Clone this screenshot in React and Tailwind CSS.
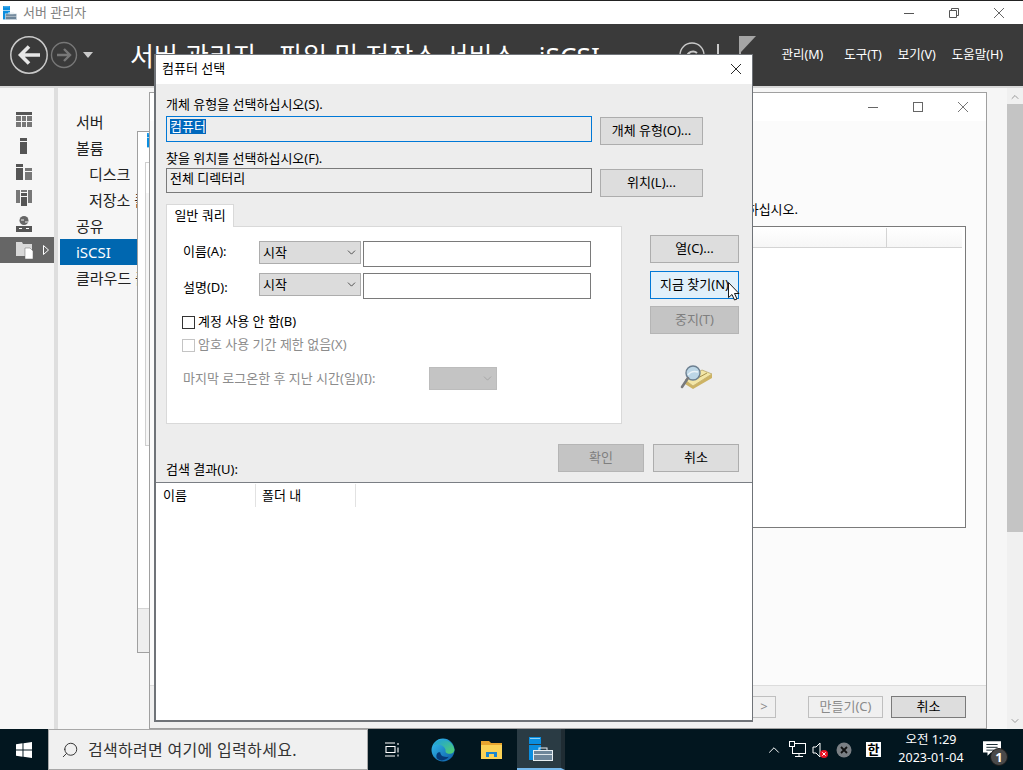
import React from 'react'
import { Search, ChevronDown, ChevronUp } from 'lucide-react'

const Btn = ({ children, className = '', state = 'normal' }) => {
  const look = {
    normal: 'bg-[#dddddd] border-[#adadad] text-black',
    hot: 'bg-[#e1f0fa] border-[#0078d7] text-black',
    disabled: 'bg-[#c4c4c4] border-[#b5b5b5] text-[#7f7f7f]',
    ghost: 'bg-[#f0f0f0] border-[#bfbfbf] text-[#8a8a8a]',
    dark: 'bg-[#dddddd] border-[#7a7a7a] text-black',
  }
  return (
    <div className={`flex items-center justify-center border text-[13px] ${look[state]} ${className}`}>
      {children}
    </div>
  )
}

// thin window caption glyphs
const CaptionIcon = ({ kind, color = '#555' }) => (
  <svg width="12" height="12" viewBox="0 0 12 12" fill="none" stroke={color} strokeWidth="1">
    {kind === 'min' && <path d="M1 6.500h10" />}
    {kind === 'max' && <rect x="1.500" y="1.500" width="9" height="9" />}
    {kind === 'restore' && <path d="M1.500 3.500h7v7h-7zM3.500 3.500v-2h7v7h-2" />}
    {kind === 'close' && <path d="M1 1l10 10M11 1L1 11" strokeWidth="0.9" />}
  </svg>
)

const ServerIcon = ({ size = 16 }) => (
  <svg width={size} height={size} viewBox="0 0 24 24">
    <rect x="0" y="0" width="12" height="7" fill="#0a8ee0" />
    <rect x="0" y="8" width="12" height="15" fill="#0a8ee0" />
    <rect x="1" y="1" width="10" height="1" fill="#8fd0f5" />
    <rect x="4.500" y="13.500" width="19" height="10" fill="#6d8599" stroke="#e8eef2" strokeWidth="1" />
    <rect x="10" y="11" width="8" height="2.500" fill="none" stroke="#e8eef2" strokeWidth="1" />
    <rect x="4.500" y="17" width="19" height="1" fill="#dfe6ea" />
  </svg>
)

const SideIcon = ({ kind }) => {
  const c = '#555555'
  if (kind === 'table') return (
    <svg width="16" height="16" viewBox="0 0 16 16">
      <rect x="0" y="0" width="16" height="3" fill={c} />
      <rect x="0" y="4" width="5" height="5" fill="#777" /><rect x="6" y="4" width="4" height="5" fill="#777" /><rect x="11" y="4" width="5" height="5" fill="#777" />
      <rect x="0" y="10" width="5" height="5" fill="#777" /><rect x="6" y="10" width="4" height="5" fill="#777" /><rect x="11" y="10" width="5" height="5" fill="#777" />
    </svg>
  )
  if (kind === 'one') return (
    <svg width="16" height="16" viewBox="0 0 16 16">
      <rect x="4" y="0" width="7" height="3" fill={c} /><rect x="4" y="4" width="7" height="12" fill={c} />
    </svg>
  )
  if (kind === 'all') return (
    <svg width="16" height="16" viewBox="0 0 16 16">
      <rect x="0" y="0" width="7" height="3" fill={c} /><rect x="0" y="4" width="7" height="12" fill={c} />
      <rect x="9" y="4" width="7" height="3" fill="#777" /><rect x="9" y="8" width="7" height="8" fill="#777" />
    </svg>
  )
  if (kind === 'group') return (
    <svg width="16" height="16" viewBox="0 0 16 16">
      <rect x="0" y="0" width="4" height="13" fill="#777" /><rect x="12" y="0" width="4" height="13" fill="#777" />
      <rect x="5" y="0" width="6" height="2" fill="#777" />
      <rect x="4" y="3" width="8" height="3" fill="#f6f6f6" /><rect x="5" y="3" width="6" height="3" fill={c} /><rect x="5" y="7" width="6" height="9" fill={c} />
    </svg>
  )
  if (kind === 'globe') return (
    <svg width="16" height="16" viewBox="0 0 16 16">
      <circle cx="8" cy="4.500" r="4.500" fill="#666" /><path d="M5 3h3v2H5zM9 5h3v2H9z" fill="#aaa" />
      <rect x="0" y="10" width="16" height="6" fill={c} />
      <rect x="3" y="12" width="3" height="1" fill="#fff" /><rect x="10" y="12" width="3" height="1" fill="#fff" />
    </svg>
  )
  return (
    <svg width="17" height="17" viewBox="0 0 17 17">
      <path d="M0 0h6l1 2h9v12H0z" fill="#d8d8d8" />
      <path d="M9 6h5l3 3v8H9z" fill="#ffffff" stroke="#666" strokeWidth="0.5" />
    </svg>
  )
}

const Select = ({ className = '', disabled, label }) => (
  <div className={`flex items-start justify-between border pl-[3px] pr-[2px] ${disabled ? 'bg-[#c4c4c4] border-[#bcbcbc]' : 'bg-[#dcdcdc] border-[#adadad]'} ${className}`}>
    <span className="text-[13px] leading-[20px]">{label}</span>
    <ChevronDown size={13} strokeWidth={1.5} className={`mt-[4px] ${disabled ? 'text-[#a0a0a0]' : 'text-[#333]'}`} />
  </div>
)

const ComputerDialog = () => (
  <div className="absolute left-[154px] top-[54px] w-[599px] h-[668px] flex flex-col bg-[#ededed] border border-[#6f7378] border-b-2 border-l-2 text-black text-[13px]">
    <div className="h-[29px] shrink-0 bg-white flex items-center justify-between pl-[6px] pr-[10px]">
      <span className="-mt-[2px]">컴퓨터 선택</span>
      <div className="-mt-[2px]"><CaptionIcon kind="close" color="#111" /></div>
    </div>

    <div className="flex-1 flex flex-col pl-[10px] pr-[12px]">
      <div className="mt-[10px] h-[20px] leading-[20px]">개체 유형을 선택하십시오(S).</div>
      <div className="flex gap-[8px] mt-[2px] h-[29px] items-start">
        <div className="w-[426px] h-[26px] border border-[#0078d7] pl-[3px] pt-[2px] flex items-start">
          <span className="bg-[#0068bd] text-white leading-[15px] h-[15px]">컴퓨터</span>
        </div>
        <Btn className="w-[103px] h-[28px] mt-[1px]">개체 유형(O)...</Btn>
      </div>
      <div className="mt-[3px] h-[20px] leading-[20px]">찾을 위치를 선택하십시오(F).</div>
      <div className="flex gap-[8px] h-[29px] items-start">
        <div className="w-[426px] h-[25px] border border-[#7a7a7a] pl-[3px] leading-[18px]">전체 디렉터리</div>
        <Btn className="w-[103px] h-[28px] mt-[1px]">위치(L)...</Btn>
      </div>

      <div className="mt-[7px] w-[68px] h-[23px] bg-white border border-b-0 border-[#d9d9d9] flex items-center justify-center relative z-10">일반 쿼리</div>
      <div className="flex -mt-[1px]">
        <div className="w-[456px] h-[198px] shrink-0 bg-white border border-[#d9d9d9] flex flex-col pl-[15px]">
          <div className="flex items-start mt-[14px]">
            <span className="ml-[1px] w-[76px] leading-[20px]">이름(A):</span>
            <Select className="w-[102px] h-[23px]" label="시작" />
            <div className="w-[228px] h-[26px] ml-[2px] bg-white border border-[#7a7a7a]" />
          </div>
          <div className="flex items-start mt-[6px]">
            <span className="ml-[1px] w-[76px] leading-[20px] mt-[4px]">설명(D):</span>
            <Select className="w-[102px] h-[23px]" label="시작" />
            <div className="w-[228px] h-[26px] ml-[2px] bg-white border border-[#7a7a7a]" />
          </div>
          <div className="flex items-center gap-[3px] mt-[15px] h-[16px]">
            <div className="w-[13px] h-[13px] border border-[#333] bg-white" />
            <span>계정 사용 안 함(B)</span>
          </div>
          <div className="flex items-center gap-[3px] mt-[7px] h-[16px] text-[#8c8c8c]">
            <div className="w-[13px] h-[13px] border border-[#c4c4c4] bg-white" />
            <span>암호 사용 기간 제한 없음(X)</span>
          </div>
          <div className="flex items-center mt-[14px]">
            <span className="ml-[1px] w-[246px] text-[#8c8c8c]">마지막 로그온한 후 지난 시간(일)(I):</span>
            <Select disabled className="w-[68px] h-[23px]" label="" />
          </div>
        </div>
        <div className="flex flex-col gap-[8px] ml-[28px] pt-[9px] w-[89px]">
          <Btn className="h-[28px]">열(C)...</Btn>
          <Btn state="hot" className="h-[28px]">지금 찾기(N)</Btn>
          <Btn state="disabled" className="h-[28px] -mt-[1px]">중지(T)</Btn>
          <div className="mt-[23px] ml-[30px]">
            <svg width="32" height="24" viewBox="0 0 32 24">
              <path d="M5 15 L22 5 L32 9 L13 21 Z" fill="#f3e6a6" stroke="#a5914e" strokeWidth="0.6" />
              <path d="M5 15 L13 21 L32 9 L32 13 L13 24 L5 19 Z" fill="#cdb364" />
              <path d="M16 14 L27 8" stroke="#a5914e" strokeWidth="1" />
              <circle cx="13" cy="8" r="7" fill="#bcd6e6" stroke="#6c7f90" strokeWidth="1.4" />
              <path d="M8 10c2-3 6-4 10-3" stroke="#eaf3f8" strokeWidth="1.5" fill="none" />
              <path d="M8 13 L2 22" stroke="#77797c" strokeWidth="2.6" strokeLinecap="round" />
            </svg>
          </div>
        </div>
      </div>

      <div className="flex items-start mt-[20px]">
        <span className="w-[392px] leading-[20px] mt-[15px]">검색 결과(U):</span>
        <Btn state="disabled" className="w-[86px] h-[28px]">확인</Btn>
        <Btn className="w-[86px] h-[28px] ml-[9px]">취소</Btn>
      </div>
    </div>

    <div className="h-[238px] shrink-0 bg-white border-t border-[#7a7e84] flex items-start pt-[1px]">
      <div className="w-[100px] h-[23px] border-r border-[#e2e2e2] pl-[7px] leading-[22px]">이름</div>
      <div className="w-[100px] h-[23px] border-r border-[#e2e2e2] pl-[6px] leading-[22px]">폴더 내</div>
    </div>
  </div>
)

const CreateWizard = () => (
  <div className="absolute left-[149px] top-[92px] w-[838px] h-[637px] bg-white border border-[#a0a0a0] flex flex-col text-[13px]">
    <div className="h-[28px] shrink-0 bg-white flex items-center justify-end gap-[33px] pr-[17px]">
      <CaptionIcon kind="min" color="#666" />
      <CaptionIcon kind="max" color="#666" />
      <CaptionIcon kind="close" color="#666" />
    </div>
    <div className="flex-1 bg-[#fbfbfb] flex flex-col items-end pr-[20px]">
      <div className="mr-[168px] mt-[78px] h-[20px] leading-[20px] text-black">사용할 대상을 선택하십시오.</div>
      <div className="w-[214px] h-[302px] mt-[7px] bg-white border border-[#7a7a7a] flex pt-[1px] pr-[3px]">
        <div className="flex-1 h-[20px] bg-gradient-to-b from-white to-[#f6f6f6] border-b border-[#d4d4d4]" />
        <div className="w-[76px] h-[20px] bg-gradient-to-b from-white to-[#f6f6f6] border-b border-l border-[#d4d4d4]" />
      </div>
    </div>
    <div className="h-[43px] shrink-0 bg-[#f0f0f0] border-t border-[#dcdcdc] flex items-start pt-[10px] justify-end pr-[20px]">
      <Btn state="ghost" className="w-[24px] h-[22px] mr-[32px]">&gt;</Btn>
      <Btn state="ghost" className="w-[75px] h-[22px]">만들기(C)</Btn>
      <Btn state="dark" className="w-[75px] h-[22px] ml-[8px]">취소</Btn>
    </div>
  </div>
)

const BackWindow = () => (
  <div className="absolute left-[137px] top-[131px] w-[20px] h-[522px] bg-white border border-[#a0a0a0] flex flex-col">
    <div className="h-[30px] pl-[9px] pt-[1px] overflow-hidden shrink-0"><ServerIcon size={15} /></div>
    <div className="h-[284px] shrink-0 ml-[7px] border border-[#cfcfcf] bg-[#f6f6f6]">
      <div className="h-[30px] bg-white" />
    </div>
    <div className="flex-1" />
    <div className="h-[44px] shrink-0 bg-[#eeeeee] border-t border-[#d4d4d4]" />
  </div>
)

const navItems = [
  ['서버', false],
  ['볼륨', false],
  ['디스크', true],
  ['저장소 풀', true],
  ['공유', false],
  ['iSCSI', false],
  ['클라우드 폴더', false],
]

const Tray = () => (
  <div className="flex items-center h-full text-white">
    <ChevronUp size={18} strokeWidth={1.3} />
    <svg width="18" height="18" viewBox="0 0 18 18" className="ml-[6px]" fill="none" stroke="#fff" strokeWidth="1">
      <rect x="3.500" y="2.500" width="13" height="10" /><path d="M10 12.500v3M6 15.500h8" /><rect x="0.500" y="0.500" width="5" height="5" fill="#02161f" />
    </svg>
    <svg width="18" height="18" viewBox="0 0 18 18" className="ml-[5px]">
      <path d="M1 6h3l4-4v14l-4-4H1z" fill="none" stroke="#fff" strokeWidth="1" />
      <circle cx="12" cy="13" r="4" fill="#e81123" /><path d="M10.300 11.300l3.400 3.400M13.700 11.300l-3.400 3.400" stroke="#fff" strokeWidth="1" />
    </svg>
    <svg width="16" height="16" viewBox="0 0 16 16" className="ml-[6px]">
      <circle cx="8" cy="8" r="7.500" fill="#7a7f84" /><path d="M5 5l6 6M11 5l-6 6" stroke="#111" strokeWidth="1.8" />
    </svg>
    <div className="ml-[14px] w-[15px] h-[15px] bg-white text-black text-[13px] leading-[15px] text-center font-bold">한</div>
    <div className="w-[90px] ml-[5px] text-center text-[12.5px] leading-[18px] -mt-[1px]">
      <div>오전 1:29</div>
      <div>2023-01-04</div>
    </div>
    <div className="relative ml-[1px] w-[30px] h-full flex items-center justify-center">
      <svg width="18" height="16" viewBox="0 0 16 14" className="-mt-[1px]">
        <path d="M0 0h16v10H7l-3 3v-3H0z" fill="#fff" />
        <path d="M3 3h10M3 5.500h10M3 8h7" stroke="#02161f" strokeWidth="0.8" />
      </svg>
      <span className="absolute left-[13px] top-[19px] w-[18px] h-[18px] rounded-full bg-[#4a4a4a] border border-[#1c1c1c] text-white text-[13px] leading-[16px] text-center font-bold">1</span>
    </div>
  </div>
)

export default function App() {
  return (
    <div className="relative w-[1023px] h-[770px] overflow-hidden bg-white flex flex-col font-['Noto_Sans','Noto_Sans_CJK_KR',sans-serif]">
      {/* title bar */}
      <div className="h-[24px] shrink-0 bg-white border-t border-[#222] flex items-center pl-[3px]">
        <ServerIcon size={14} />
        <span className="ml-[6px] text-[13px] text-[#808080]">서버 관리자</span>
        <div className="ml-auto flex items-center gap-[33px] pr-[18px]">
          <CaptionIcon kind="min" color="#555" />
          <CaptionIcon kind="restore" color="#555" />
          <CaptionIcon kind="close" color="#555" />
        </div>
      </div>

      {/* header */}
      <div className="h-[62px] shrink-0 bg-[#3a3a3a] flex items-center text-white">
        <svg width="40" height="40" viewBox="0 0 40 40" className="ml-[9px]">
          <circle cx="20" cy="20" r="18.200" fill="none" stroke="#c9c9c9" strokeWidth="1.500" />
          <path d="M31 20H12M20 11.500l-8.500 8.500 8.500 8.500" fill="none" stroke="#e6e6e6" strokeWidth="3.600" />
        </svg>
        <svg width="28" height="28" viewBox="0 0 28 28" className="ml-[1px]">
          <circle cx="14" cy="14" r="12.500" fill="none" stroke="#777" strokeWidth="1.400" />
          <path d="M7 14h13M14 8l6 6-6 6" fill="none" stroke="#777" strokeWidth="2.400" />
        </svg>
        <svg width="10" height="6" viewBox="0 0 10 6" className="ml-[5px]"><path d="M0 0h10L5 6z" fill="#c9c9c9" /></svg>
        <div className="ml-[37px] text-[26px] tracking-[0.15px] whitespace-nowrap w-[549px] overflow-hidden mt-[2px]">서버 관리자 › 파일 및 저장소 서비스 › iSCSI</div>
        <svg width="28" height="28" viewBox="0 0 28 28" className="-mt-[1px]">
          <circle cx="13" cy="14" r="12" fill="none" stroke="#c9c9c9" strokeWidth="1.400" />
          <path d="M8 16a6 6 0 0 1 10-4" fill="none" stroke="#c9c9c9" strokeWidth="2" />
        </svg>
        <div className="w-[2px] h-[13px] bg-[#c9c9c9] ml-[10px] -mt-[10px]" />
        <svg width="18" height="24" viewBox="0 0 18 24" className="ml-[20px] -mt-[14px]">
          <path d="M0 0h17L2 16v8H0z" fill="#a5a5a5" />
        </svg>
        <div className="ml-auto flex text-[12.5px] pr-[20px]">
          <span className="mr-[21px]">관리(M)</span>
          <span className="mr-[16px]">도구(T)</span>
          <span className="mr-[16px]">보기(V)</span>
          <span>도움말(H)</span>
        </div>
      </div>

      {/* body */}
      <div className="flex-1 flex min-h-0 bg-[#f6f6f6] border-t-2 border-[#d8d8d8]">
        <div className="w-[54px] shrink-0 flex flex-col pt-[19px]">
          {['table', 'one', 'all', 'group', 'globe', 'share'].map((k) => (
            <div key={k} className={`h-[26px] flex items-center pl-[16px] ${k === 'share' ? 'bg-[#666666]' : ''}`}>
              <SideIcon kind={k} />
              {k === 'share' && <svg width="6" height="10" viewBox="0 0 6 10" className="ml-[10px]"><path d="M0.500 0.500L5.500 5L0.500 9.500z" fill="none" stroke="#fff" /></svg>}
            </div>
          ))}
        </div>
        <div className="w-[4px] shrink-0 bg-[#dedede]" />
        <div className="w-[78px] shrink-0 ml-[2px] flex flex-col pt-[21px] text-[15px] whitespace-nowrap">
          {navItems.map(([name, sub]) => (
            <div key={name} className={`h-[26px] flex items-center ${sub ? 'pl-[29px]' : 'pl-[16px]'} ${name === 'iSCSI' ? 'bg-[#0067b0] text-white' : 'text-[#222]'}`}>{name}</div>
          ))}
        </div>
        <div className="flex-1" />
        <div className="w-[16px] shrink-0 flex flex-col bg-[#f0f0f0] items-center text-[#999]">
          <ChevronUp size={12} className="mt-[3px]" />
          <div className="w-full h-[428px] mt-[1px] bg-[#c4c4c4]" />
          <ChevronDown size={12} className="mt-auto mb-[2px]" />
        </div>
      </div>

      {/* taskbar */}
      <div className="h-[41px] shrink-0 bg-[#02161f] flex items-center">
        <div className="w-[48px] flex justify-center">
          <svg width="16" height="16" viewBox="0 0 15 15" fill="#fff">
            <path d="M0 2.100l6.100-.9v5.900H0zM7 1.100L15 0v7.100H7zM0 8h6.100v5.900L0 13zM7 8h8v7l-8-1.100z" />
          </svg>
        </div>
        <div className="w-[320px] h-full bg-[#f0f0f0] border border-[#a8a8a8] flex items-center pl-[12px] text-[#333]">
          <Search size={18} strokeWidth={1.300} className="-scale-x-100" />
          <span className="ml-[9px] text-[16px] tracking-[0.3px]">검색하려면 여기에 입력하세요.</span>
        </div>
        <div className="ml-[17px]">
          <svg width="15" height="15" viewBox="0 0 15 15" fill="none" stroke="#fff" strokeWidth="1.100">
            <path d="M0 1h10M1 4.500h9v6H1zM0 14h10M13 1v2M13 5.500v5M13 12.500v2" />
          </svg>
        </div>
        <div className="ml-[31px]">
          <svg width="24" height="24" viewBox="0 0 23 23">
            <defs>
              <linearGradient id="edgeA" x1="0" y1="0" x2="1" y2="1"><stop offset="0" stopColor="#35c1f1" /><stop offset="1" stopColor="#0c59a4" /></linearGradient>
              <linearGradient id="edgeB" x1="0" y1="0" x2="1" y2="1"><stop offset="0" stopColor="#1b9de2" /><stop offset="1" stopColor="#54d16a" /></linearGradient>
            </defs>
            <circle cx="11.500" cy="11.500" r="11" fill="url(#edgeA)" />
            <path d="M2 7C5 0 20-1 22.500 11c0 3-3 4.500-6 4-2-.4-3-1.500-2.500-3.500C13 7 7 5 2 7z" fill="url(#edgeB)" />
            <path d="M9 14c0 3 3 5 8 4-2 3-7 5-11 2-2-3 0-8 3-6z" fill="#063a78" />
          </svg>
        </div>
        <div className="ml-[26px]">
          <svg width="21" height="18" viewBox="0 0 21 18">
            <path d="M0 0h8l2 2h11v16H0z" fill="#e8a52f" />
            <path d="M0 4h21v14H0z" fill="#fbd256" />
            <path d="M5 16v-5h11v5h-3v-3H8v3z" fill="#1a86d0" />
          </svg>
        </div>
        <div className="ml-[15px] w-[48px] h-full bg-[#2a3b44] border-b-2 border-[#76b9ed] border-r-4 border-r-[#1f2c33] flex items-center pl-[12px]">
          <ServerIcon size={24} />
        </div>
        <div className="ml-[200px] h-full"><Tray /></div>
      </div>

      <BackWindow />
      <CreateWizard />
      <ComputerDialog />

      {/* mouse cursor */}
      <svg width="12" height="19" viewBox="0 0 12 19" className="absolute left-[728px] top-[282px]">
        <path d="M0.500 0.500V15.500L4 12.500L6.500 18L9 17L6.500 11.500H11z" fill="#fff" stroke="#000" strokeWidth="0.900" />
      </svg>
    </div>
  )
}
